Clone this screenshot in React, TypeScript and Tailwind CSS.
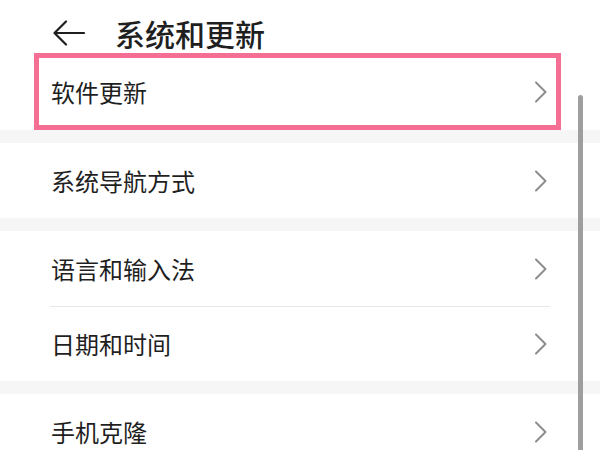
const font = { fontFamily: '"Noto Sans CJK SC", "Noto Sans", sans-serif' };

function Chevron() {
  return (
    <svg width="14" height="22" viewBox="0 0 14 22" fill="none" className="shrink-0">
      <path d="M2 1.5 L11.5 11 L2 20.5" stroke="#8c8c8c" strokeWidth="2" strokeLinecap="round" strokeLinejoin="round" />
    </svg>
  );
}

function Row({ label, h = "h-[75px]" }: { label: string; h?: string }) {
  return (
    <div className={`flex items-center justify-between pl-[51px] pr-[52px] bg-white ${h}`}>
      <span className="text-[24px] text-[#1f1f1f] leading-none">{label}</span>
      <Chevron />
    </div>
  );
}

function Band() {
  return <div className="h-[13px] bg-[#f6f6f6]" />;
}

export default function App() {
  return (
    <div className="relative w-[600px] h-[450px] overflow-hidden bg-white" style={font}>
      <div className="flex items-center h-[66px] pl-[53px] pb-[1px] -mb-[13px]">
        <svg width="32" height="26" viewBox="0 0 32 26" fill="none">
          <path d="M13 1.5 L1.5 13 L13 24.5 M1.5 13 H31" stroke="#1f1f1f" strokeWidth="2.2" strokeLinecap="round" strokeLinejoin="round" />
        </svg>
        <span className="ml-[30px] text-[30px] font-medium text-[#1f1f1f] leading-none">系统和更新</span>
      </div>
      <Row label="软件更新" h="h-[77px]" />
      <Band />
      <Row label="系统导航方式" />
      <Band />
      <Row label="语言和输入法" />
      <div className="ml-[50px] mr-[50px] h-px bg-[#e6e6e6]" />
      <Row label="日期和时间" h="h-[74px]" />
      <Band />
      <Row label="手机克隆" />

      <div className="absolute left-[34px] top-[53px] w-[527px] h-[77px] border-[5px] border-[#f56e93]" />
      <div className="absolute left-[578px] top-[95px] w-[5px] h-[360px] rounded-full bg-[#9e9e9e]" />
    </div>
  );
}
